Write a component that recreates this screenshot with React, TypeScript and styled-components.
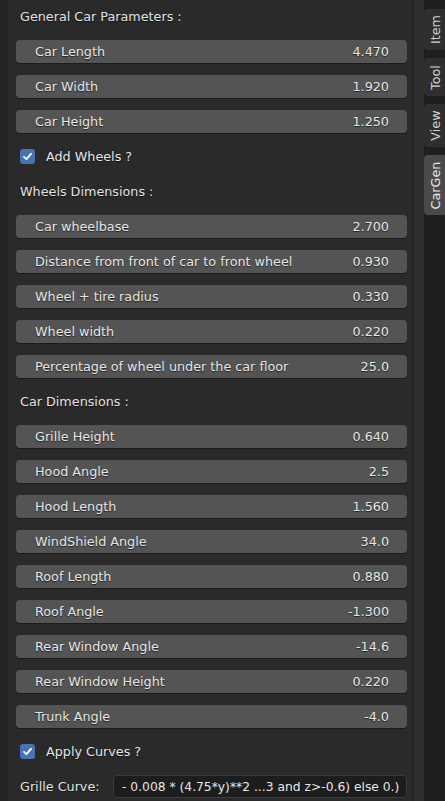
import React from "react";
import styled, { createGlobalStyle } from "styled-components";

const Global = createGlobalStyle`
  *, *::before, *::after { box-sizing: border-box; }
  html, body { margin: 0; padding: 0; background: #232323; }
  body { font-family: "DejaVu Sans", "Liberation Sans", sans-serif; }
`;

const FONT = "12.75px";

const Root = styled.div`
  display: flex;
  width: 445px;
  height: 801px;
  overflow: hidden;
  background: #232323;
  & > * { flex-shrink: 0; }
`;

const LeftStrip = styled.div`
  width: 9px;
  background: #252525;
  border-right: 1px solid #2d2d2d;
`;

const Panel = styled.div`
  width: 403px;
  background: #2a2a2a;
  padding: 5px 5px 0 7px;
  display: flex;
  flex-direction: column;
  gap: 12px;
`;

const Divider = styled.div`
  width: 2px;
  background: #252525;
`;

const Gutter = styled.div`
  width: 10px;
  background: #2e2e2e;
`;

const TabColumn = styled.div`
  width: 21px;
  background: #1f1f1f;
  display: flex;
  flex-direction: column;
  align-items: flex-end;
  padding-top: 9px;
  gap: 8px;
`;

const Tab = styled.div<{ $h: number; $active?: boolean }>`
  width: 21px;
  height: ${(p) => p.$h}px;
  background: ${(p) => (p.$active ? "#4a4a4a" : "#2f2f2f")};
  border-radius: 4px 0 0 4px;
  display: flex;
  align-items: center;
  justify-content: center;
  color: ${(p) => (p.$active ? "#e8e8e8" : "#cfcfcf")};
  font-size: ${FONT};
  white-space: nowrap;
  flex-shrink: 0;
`;

const TabText = styled.span`
  display: inline-block;
  transform: rotate(-90deg);
  transform-origin: center;
  margin-left: 2px;
`;

const Row = styled.div`
  height: 23px;
  display: flex;
  align-items: center;
  flex-shrink: 0;
  font-size: ${FONT};
`;

const Heading = styled(Row)`
  padding-left: 4px;
  color: #e2e2e2;
  text-shadow: 0 1px 1px rgba(0, 0, 0, 0.6);
`;

const Field = styled(Row)`
  background: #545454;
  border-radius: 4px;
  box-shadow: 0 1px 0 rgba(0, 0, 0, 0.35);
  justify-content: space-between;
  padding: 0 18px 0 19px;
  color: #e6e6e6;
  text-shadow: 0 1px 1px rgba(0, 0, 0, 0.6);
`;

const CheckRow = styled(Row)`
  padding-left: 4px;
  gap: 11px;
  color: #e6e6e6;
  text-shadow: 0 1px 1px rgba(0, 0, 0, 0.6);
`;

const Box = styled.div`
  width: 15px;
  height: 15px;
  border-radius: 3px;
  background: #4772b3;
  display: flex;
  align-items: center;
  justify-content: center;
`;

const TextRow = styled(Row)`
  padding-left: 4px;
  gap: 12px;
  color: #e2e2e2;
`;

const TextLabel = styled.span`
  width: 81px;
  text-shadow: 0 1px 1px rgba(0, 0, 0, 0.6);
`;

const TextInput = styled.div`
  flex: 1;
  height: 23px;
  background: #1d1d1d;
  border: 1px solid #3a3a3a;
  border-radius: 4px;
  display: flex;
  align-items: center;
  padding-left: 8px;
  color: #e6e6e6;
  font-size: 12.3px;
  white-space: nowrap;
  overflow: hidden;
`;

type Item =
  | { kind: "h"; text: string }
  | { kind: "f"; label: string; value: string }
  | { kind: "c"; label: string };

const items: Item[] = [
  { kind: "h", text: "General Car Parameters :" },
  { kind: "f", label: "Car Length", value: "4.470" },
  { kind: "f", label: "Car Width", value: "1.920" },
  { kind: "f", label: "Car Height", value: "1.250" },
  { kind: "c", label: "Add Wheels ?" },
  { kind: "h", text: "Wheels Dimensions :" },
  { kind: "f", label: "Car wheelbase", value: "2.700" },
  { kind: "f", label: "Distance from front of car to front wheel", value: "0.930" },
  { kind: "f", label: "Wheel + tire radius", value: "0.330" },
  { kind: "f", label: "Wheel width", value: "0.220" },
  { kind: "f", label: "Percentage of wheel under the car floor", value: "25.0" },
  { kind: "h", text: "Car Dimensions :" },
  { kind: "f", label: "Grille Height", value: "0.640" },
  { kind: "f", label: "Hood Angle", value: "2.5" },
  { kind: "f", label: "Hood Length", value: "1.560" },
  { kind: "f", label: "WindShield Angle", value: "34.0" },
  { kind: "f", label: "Roof Length", value: "0.880" },
  { kind: "f", label: "Roof Angle", value: "-1.300" },
  { kind: "f", label: "Rear Window Angle", value: "-14.6" },
  { kind: "f", label: "Rear Window Height", value: "0.220" },
  { kind: "f", label: "Trunk Angle", value: "-4.0" },
  { kind: "c", label: "Apply Curves ?" },
];

const Check = () => (
  <Box>
    <svg width="11" height="11" viewBox="0 0 11 11">
      <path d="M2 5.8 L4.4 8.2 L9 2.8" fill="none" stroke="#fff" strokeWidth="1.8" strokeLinecap="round" strokeLinejoin="round" />
    </svg>
  </Box>
);

export default function App() {
  return (
    <>
      <Global />
      <Root>
        <LeftStrip />
        <Panel>
          {items.map((it, i) => {
            if (it.kind === "h") return <Heading key={i}>{it.text}</Heading>;
            if (it.kind === "c")
              return (
                <CheckRow key={i}>
                  <Check />
                  <span>{it.label}</span>
                </CheckRow>
              );
            return (
              <Field key={i}>
                <span>{it.label}</span>
                <span>{it.value}</span>
              </Field>
            );
          })}
          <TextRow>
            <TextLabel>Grille Curve:</TextLabel>
            <TextInput>- 0.008 * (4.75*y)**2 ...3 and z&gt;-0.6) else 0.)</TextInput>
          </TextRow>
        </Panel>
        <Divider />
        <Gutter />
        <TabColumn>
          <Tab $h={41}><TabText>Item</TabText></Tab>
          <Tab $h={38}><TabText>Tool</TabText></Tab>
          <Tab $h={43}><TabText>View</TabText></Tab>
          <Tab $h={60} $active><TabText>CarGen</TabText></Tab>
        </TabColumn>
      </Root>
    </>
  );
}
